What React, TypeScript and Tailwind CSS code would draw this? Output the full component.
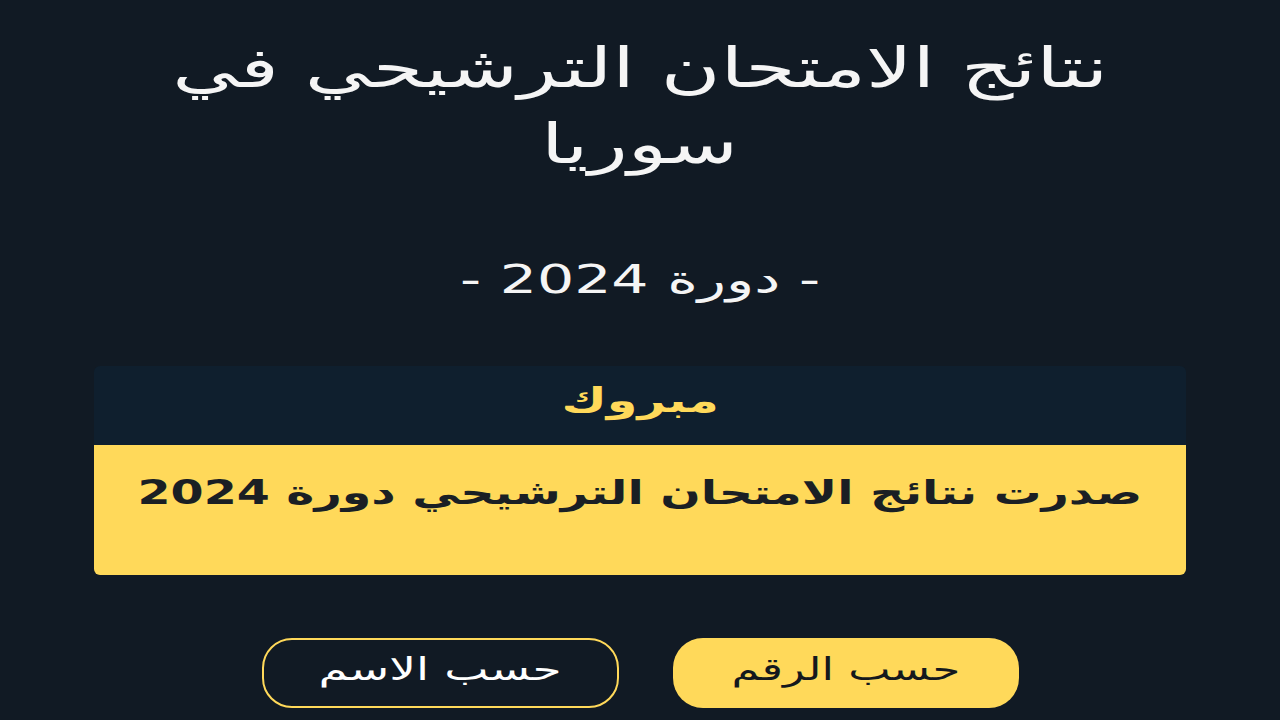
import React from "react";

const B = "inline-block origin-center";

export default function App() {
  return (
    <div
      dir="rtl"
      className="w-[1280px] h-[720px] overflow-hidden bg-[#111a24] text-white flex flex-col items-center"
      style={{ fontFamily: '"DejaVu Sans", "Noto Sans", sans-serif' }}
    >
      <h1 className="mt-[30px] text-center text-[55px] leading-[76px] font-normal text-[#f5f5f5] flex flex-col items-center">
        <span className={`${B} scale-x-[1.48]`}>نتائج الامتحان الترشيحي في</span>
        <span className={`${B} scale-x-[1.48]`}>سوريا</span>
      </h1>
      <p className="mt-[73px] text-center text-[39px] leading-[50px] text-[#f5f5f5]">
        <span className={`${B} scale-x-[1.5]`}>- دورة 2024 -</span>
      </p>
      <div className="mt-[61px] w-[1092px] rounded-[6px] overflow-hidden">
        <div className="h-[79px] bg-[#0f1f2e] flex items-center justify-center pb-[12px]">
          <span className={`${B} scale-x-[1.45] text-[34px] font-bold text-[#ffd95a] leading-none`}>مبروك</span>
        </div>
        <div className="h-[130px] bg-[#ffd95a] flex justify-center pt-[28px]">
          <span className={`${B} scale-x-[1.44] text-[33px] font-bold text-[#1a1f24] leading-[40px]`}>
            صدرت نتائج الامتحان الترشيحي دورة 2024
          </span>
        </div>
      </div>
      <div className="mt-[63px] flex gap-[54px]">
        <button className="w-[346px] h-[70px] rounded-[30px] bg-[#ffd95a] text-[#14181d] text-[31px] flex items-center justify-center pb-[8px]">
          <span className={`${B} scale-x-[1.45]`}>حسب الرقم</span>
        </button>
        <button className="w-[357px] h-[70px] rounded-[30px] border-2 border-[#ffd95a] text-white text-[31px] flex items-center justify-center pb-[8px]">
          <span className={`${B} scale-x-[1.52]`}>حسب الاسم</span>
        </button>
      </div>
    </div>
  );
}
